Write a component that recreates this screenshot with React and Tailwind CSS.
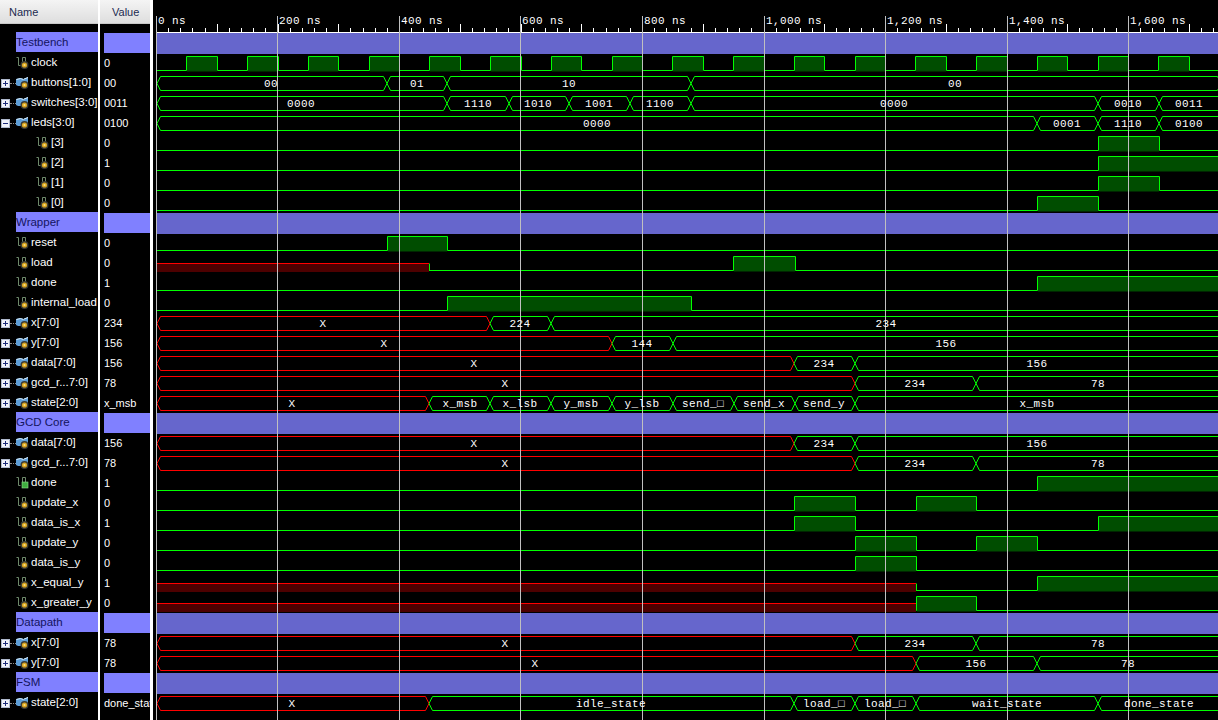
const MONO = 'font-["Liberation_Mono","DejaVu_Sans_Mono",monospace]'

// segs = bus segments ending at pixel x, labels centred at pixel x
const X = (to, at) => ({ red: true, label: 'X', to, at })
const S = (label, to, at) => ({ label, to, at })

const dataSegs = [X(794, 474), S('234', 855, 824), S('156', 1300, 1037)]
const gcdSegs = [X(855, 505), S('234', 976, 915), S('78', 1300, 1098)]

const rows = [
  { group: 'Testbench' },
  { name: 'clock', value: '0', icon: 'bit', clock: true },
  { name: 'buttons[1:0]', value: '00', icon: 'bus', box: '+', segs: [S('00', 387, 271), S('01', 447, 417), S('10', 691, 569), S('00', 1221, 955)] },
  { name: 'switches[3:0]', value: '0011', icon: 'bus', box: '+', segs: [S('0000', 447, 301), S('1110', 509, 478), S('1010', 569, 538), S('1001', 630, 599), S('1100', 691, 660), S('0000', 1098, 894), S('0010', 1159, 1128), S('0011', 1300, 1189)] },
  { name: 'leds[3:0]', value: '0100', icon: 'bus', box: '-', segs: [S('0000', 1037, 597), S('0001', 1098, 1067), S('1110', 1159, 1128), S('0100', 1300, 1189)] },
  { name: '[3]', value: '0', icon: 'bit', nested: true, high: [[1098, 1159]] },
  { name: '[2]', value: '1', icon: 'bit', nested: true, high: [[1098, 1300]] },
  { name: '[1]', value: '0', icon: 'bit', nested: true, high: [[1098, 1159]] },
  { name: '[0]', value: '0', icon: 'bit', nested: true, high: [[1037, 1098]] },
  { group: 'Wrapper' },
  { name: 'reset', value: '0', icon: 'bit', high: [[387, 447]] },
  { name: 'load', value: '0', icon: 'bit', unknown: 429, high: [[733, 795]] },
  { name: 'done', value: '1', icon: 'bit', high: [[1037, 1300]] },
  { name: 'internal_load', value: '0', icon: 'bit', high: [[447, 691]] },
  { name: 'x[7:0]', value: '234', icon: 'bus', box: '+', segs: [X(490, 323), S('224', 551, 520), S('234', 1300, 886)] },
  { name: 'y[7:0]', value: '156', icon: 'bus', box: '+', segs: [X(612, 384), S('144', 673, 642), S('156', 1300, 946)] },
  { name: 'data[7:0]', value: '156', icon: 'bus', box: '+', segs: dataSegs },
  { name: 'gcd_r...7:0]', value: '78', icon: 'bus', box: '+', segs: gcdSegs },
  { name: 'state[2:0]', value: 'x_msb', icon: 'bus', box: '+', segs: [X(429, 292), S('x_msb', 490, 460), S('x_lsb', 551, 520), S('y_msb', 612, 581), S('y_lsb', 673, 642), S('send_□', 734, 703), S('send_x', 795, 764), S('send_y', 855, 824), S('x_msb', 1300, 1037)] },
  { group: 'GCD Core' },
  { name: 'data[7:0]', value: '156', icon: 'bus', box: '+', segs: dataSegs },
  { name: 'gcd_r...7:0]', value: '78', icon: 'bus', box: '+', segs: gcdSegs },
  { name: 'done', value: '1', icon: 'out', high: [[1037, 1300]] },
  { name: 'update_x', value: '0', icon: 'bit', high: [[794, 855], [916, 976]] },
  { name: 'data_is_x', value: '1', icon: 'bit', high: [[794, 855], [1098, 1300]] },
  { name: 'update_y', value: '0', icon: 'bit', high: [[855, 916], [976, 1037]] },
  { name: 'data_is_y', value: '0', icon: 'bit', high: [[855, 916]] },
  { name: 'x_equal_y', value: '1', icon: 'bit', unknown: 916, high: [[1037, 1300]] },
  { name: 'x_greater_y', value: '0', icon: 'bit', unknown: 916, high: [[916, 976]] },
  { group: 'Datapath' },
  { name: 'x[7:0]', value: '78', icon: 'bus', box: '+', segs: gcdSegs },
  { name: 'y[7:0]', value: '78', icon: 'bus', box: '+', segs: [X(916, 535), S('156', 1037, 976), S('78', 1300, 1128)] },
  { group: 'FSM' },
  { name: 'state[2:0]', value: 'done_state', icon: 'bus', box: '+', segs: [X(429, 292), S('idle_state', 794, 611), S('load_□', 855, 824), S('load_□', 916, 885), S('wait_state', 1098, 1007), S('done_state', 1300, 1159)] },
]

const GREEN = '#00ff00'
const RED = '#ff0000'
const GRID = [156, 277, 399, 520, 642, 764, 885, 1007, 1128]
const TIMES = ['0 ns', '200 ns', '400 ns', '600 ns', '800 ns', '1,000 ns', '1,200 ns', '1,400 ns', '1,600 ns']

function ExpandBox({ sign }) {
  return (
    <svg width="9" height="9" viewBox="0 0 9 9" className="absolute left-[1px] top-[7px]">
      <rect x="0.5" y="0.5" width="8" height="8" fill="#f0f2f8" stroke="#aeb8cc" />
      <path d={sign === '+' ? 'M2 4.5h5M4.5 2v5' : 'M2 4.5h5'} stroke="#1c2a78" fill="none" />
    </svg>
  )
}

function SignalIcon({ kind }) {
  if (kind === 'bus') {
    return (
      <svg width="13" height="14" viewBox="0 0 13 14">
        <path d="M0 4l4-1 4 1 4-2v8l-4 1H2l-2-1z" fill="#5f9fd8" />
        <path d="M0.5 4.5l4-1 3 1M8 4l4-1.5" stroke="#dceefb" fill="none" />
        <circle cx="8.5" cy="10" r="4" fill="#3a3a34" />
        <circle cx="8.5" cy="10" r="2.6" fill="#d9a520" />
        <circle cx="8.5" cy="10" r="1.1" fill="#f7e08a" />
      </svg>
    )
  }
  return (
    <svg width="13" height="14" viewBox="0 0 13 14">
      <path d="M0.5 2.5h2v8h2M6.5 2.5h3v5M6.5 2.5v6" stroke="#6f8a6c" fill="none" />
      {kind === 'out' ? (
        <rect x="6" y="7" width="6" height="6" fill="#3fae3f" stroke="#8fe08f" strokeWidth="0.6" />
      ) : (
        <>
          <circle cx="8.5" cy="10" r="4" fill="#3a3a34" />
          <circle cx="8.5" cy="10" r="2.6" fill="#d9a520" />
          <circle cx="8.5" cy="10" r="1.1" fill="#f7e08a" />
        </>
      )}
    </svg>
  )
}

function NameRow({ row }) {
  if (row.group) {
    return (
      <div className="h-5 ml-4 bg-[#8080ff] text-[#14145e] leading-5 whitespace-nowrap overflow-hidden">{row.group}</div>
    )
  }
  return (
    <div className="h-5 relative flex items-center whitespace-nowrap overflow-hidden text-white">
      {row.box && <ExpandBox sign={row.box} />}
      {row.box && <div className="absolute left-[10px] top-[11px] w-[6px] border-t border-dotted border-[#8a8a8a]" />}
      <div className={row.nested ? 'ml-9 mr-[2px]' : 'ml-4 mr-[2px]'}>
        <SignalIcon kind={row.icon} />
      </div>
      <span className="leading-5">{row.name}</span>
    </div>
  )
}

function BitWave({ row, y }) {
  const top = y + 4.5
  const low = y + 18.5
  const highs = row.clock
    ? Array.from({ length: 18 }, (_, k) => [Math.round(186.4 + 60.75 * k), Math.round(216.8 + 60.75 * k)])
    : row.high || []
  let d = ''
  let cursor = row.unknown || 156
  highs.forEach(([a, b]) => {
    d += `M${cursor} ${low}H${a + 0.5}V${top}H${b + 0.5}V${low}`
    cursor = b + 0.5
  })
  d += `M${cursor} ${low}H1218`
  return (
    <g>
      {row.unknown && (
        <g>
          <rect x="157" y={y + 11} width={row.unknown - 157} height="9" fill="#4d0000" />
          <path d={`M157 ${y + 11.5}H${row.unknown}`} stroke={RED} />
          {highs[0]?.[0] !== row.unknown && <path d={`M${row.unknown + 0.5} ${y + 11.5}V${low}`} stroke={GREEN} />}
        </g>
      )}
      {highs.map(([a, b], i) => (
        <rect key={i} x={a + 1} y={y + 5} width={b - a - 1} height="14.5" fill="#004d00" />
      ))}
      <path d={d} stroke={GREEN} fill="none" />
    </g>
  )
}

function BusWave({ segs, y }) {
  const top = y + 4.5
  const mid = y + 11.5
  const bot = y + 18.5
  let from = 157
  return (
    <g>
      {segs.map((s, i) => {
        const a = from
        const b = s.to
        from = b
        return (
          <path
            key={i}
            d={`M${a} ${mid}L${a + 3.5} ${top}H${b - 3.5}L${b} ${mid}L${b - 3.5} ${bot}H${a + 3.5}Z`}
            stroke={s.red ? RED : GREEN}
            fill="none"
          />
        )
      })}
    </g>
  )
}

function BusLabels({ segs, y }) {
  return segs.map((s, i) => (
    <text key={i} x={s.at} y={y + 15} textAnchor="middle" fill="#ffffff">{s.label}</text>
  ))
}

function Waveform() {
  const ticks = Array.from({ length: 88 }, (_, i) => i)
  return (
    <svg
      width="1062"
      height="720"
      viewBox="156 0 1062 720"
      className={`shrink-0 text-[11px] tracking-[0.4px] ${MONO}`}
    >
      {/* ruler */}
      {ticks.map((i) => {
        const x = Math.round(156 + 12.15 * i) + 0.5
        return <path key={i} d={`M${x} ${i % 5 === 0 ? 24 : 28}V32`} stroke="#ffffff" />
      })}
      <path d="M156 32.5H1218" stroke="#ffffff" />
      {TIMES.map((t, i) => (
        <text key={t} x={GRID[i] + 2} y="24" fill="#ffffff">{t}</text>
      ))}

      {rows.map((row, i) => {
        const y = 32 + i * 20
        if (row.group) return <rect key={i} x="156" y={y + 1} width="1062" height="21" fill="#6666cc" />
        if (row.segs) return <BusWave key={i} segs={row.segs} y={y} />
        return <BitWave key={i} row={row} y={y} />
      })}

      {GRID.map((x) => (
        <path key={x} d={`M${x + 0.5} 16V720`} stroke="#c0c0c0" />
      ))}

      {rows.map((row, i) => row.segs && <BusLabels key={i} segs={row.segs} y={32 + i * 20} />)}
    </svg>
  )
}

export default function App() {
  return (
    <div className='flex w-[1218px] h-[720px] overflow-hidden bg-black font-["Liberation_Sans",sans-serif] text-[11.5px]'>
      {/* Name column */}
      <div className="w-[98px] shrink-0">
        <div className="h-6 flex items-center pl-[9px] pt-px bg-gradient-to-b from-[#f4f4f4] to-[#dedede] border-b border-[#c8c8c8] text-[#1c2a50] text-[11px] mb-2">Name</div>
        {rows.map((row, i) => <NameRow key={i} row={row} />)}
      </div>
      <div className="w-[2px] shrink-0 bg-white" />

      {/* Value column */}
      <div className="w-[50px] shrink-0 text-[11px]">
        <div className="h-6 flex items-center pl-3 pt-px bg-gradient-to-b from-[#f4f4f4] to-[#dedede] border-b border-[#c8c8c8] text-[#1c2a50] mb-[9px]">Value</div>
        {rows.map((row, i) =>
          row.group
            ? <div key={i} className="h-5 ml-1 bg-[#8080ff]" />
            : <div key={i} className="h-5 pl-1 leading-5 text-white whitespace-nowrap overflow-hidden">{row.value}</div>
        )}
      </div>
      <div className="w-[3px] shrink-0 bg-white" />
      <div className="w-[3px] shrink-0" />

      <Waveform />
    </div>
  )
}
